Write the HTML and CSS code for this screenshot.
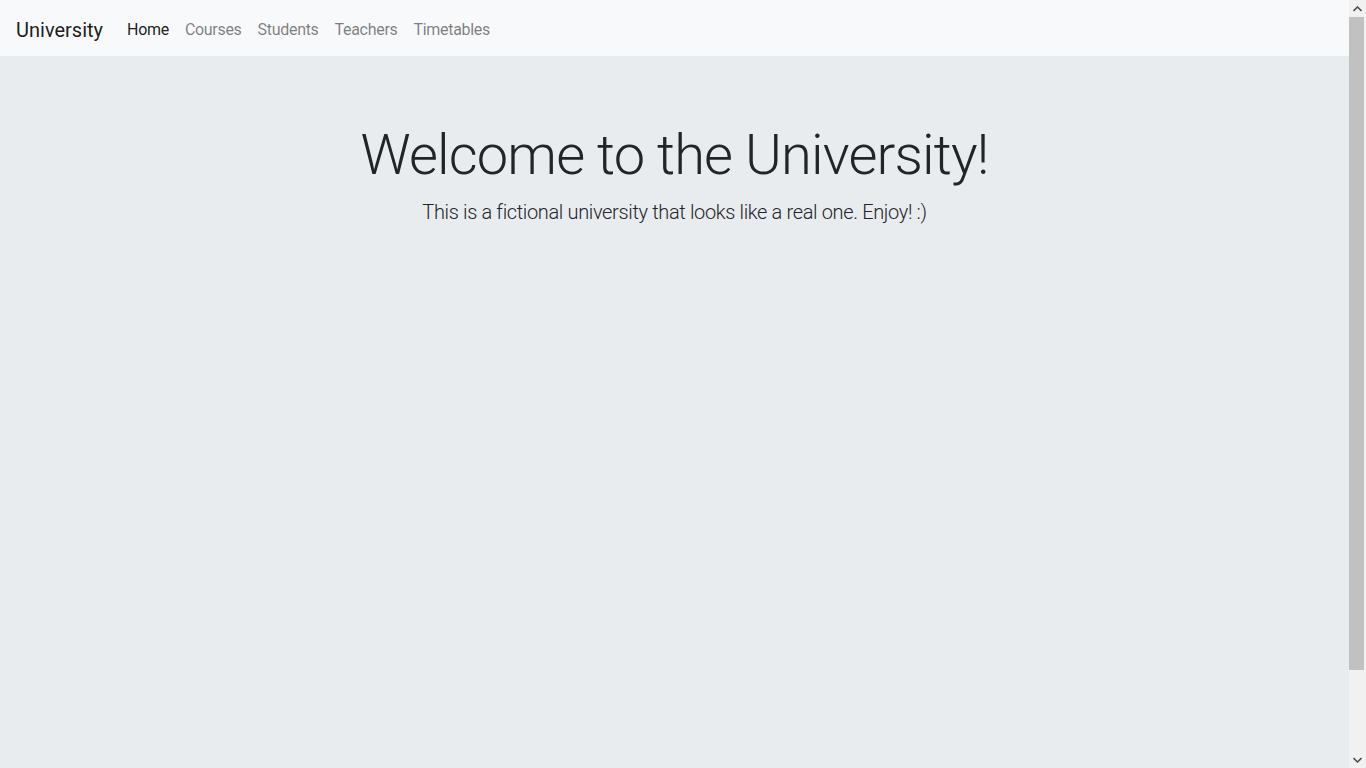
FILE: index.html
```html
<!DOCTYPE html>
<html lang="en">
<head>
<meta charset="utf-8">
<title>University</title>
<link rel="stylesheet" href="styles.css">
</head>
<body>
<div class="page">
  <nav class="navbar">
    <a class="brand" href="#">University</a>
    <ul class="nav">
      <li><a class="nav-link active" href="#">Home</a></li>
      <li><a class="nav-link" href="#">Courses</a></li>
      <li><a class="nav-link" href="#">Students</a></li>
      <li><a class="nav-link" href="#">Teachers</a></li>
      <li><a class="nav-link" href="#">Timetables</a></li>
    </ul>
  </nav>
  <main class="jumbotron">
    <h1 class="display">Welcome to the University!</h1>
    <p class="lead">This is a fictional university that looks like a real one. Enjoy! :)</p>
  </main>
</div>
<div class="scrollbar" aria-hidden="true">
  <div class="sb-btn"><svg width="9" height="6" viewBox="0 0 9 6"><path d="M0.5 5 L4.5 1 L8.5 5" fill="none" stroke="#505050" stroke-width="1.6"/></svg></div>
  <div class="sb-track"><div class="sb-thumb"></div></div>
  <div class="sb-btn"><svg width="9" height="6" viewBox="0 0 9 6"><path d="M0.5 1 L4.5 5 L8.5 1" fill="none" stroke="#505050" stroke-width="1.6"/></svg></div>
</div>
</body>
</html>
```
FILE: styles.css
```css
html, body { height: 100%; overflow: hidden; }
body {
  margin: 0;
  display: flex;
  background: #e9ecef;
  font-family: "Roboto", "Open Sans", sans-serif;
  color: #212529;
  font-size: 16px;
  line-height: 1.5;
}
.page {
  flex: 1;
  display: flex;
  flex-direction: column;
  min-width: 0;
}
.navbar {
  height: 56px;
  box-sizing: border-box;
  background: #f8f9fa;
  display: flex;
  align-items: center;
  padding: 10px 16px 6px;
}
.brand {
  font-size: 20px;
  color: rgba(0,0,0,.9);
  text-decoration: none;
  margin-right: 16px;
  line-height: 30px;
}
.nav {
  display: flex;
  list-style: none;
  margin: 0;
  padding: 0;
}
.nav-link {
  display: block;
  padding: 8px;
  color: rgba(0,0,0,.5);
  text-decoration: none;
  letter-spacing: -0.3px;
}
.nav-link.active { color: rgba(0,0,0,.9); }
.jumbotron {
  flex: 1;
  background: #e9ecef;
  padding: 66px 32px 64px;
  text-align: center;
}
.display {
  margin: 0 0 8px;
  font-size: 56px;
  font-weight: 300;
  line-height: 1.2;
  letter-spacing: -0.85px;
}
.lead {
  margin: 0;
  font-size: 20px;
  font-weight: 300;
  letter-spacing: -0.35px;
}
.scrollbar {
  width: 17px;
  flex: none;
  background: #f1f1f1;
  display: flex;
  flex-direction: column;
}
.sb-btn {
  height: 17px;
  display: flex;
  align-items: center;
  justify-content: center;
}
.sb-track {
  flex: 1;
  display: flex;
  flex-direction: column;
}
.sb-thumb {
  height: 653px;
  margin: 0 2px 0 0;
  background: #c1c1c1;
}
```
